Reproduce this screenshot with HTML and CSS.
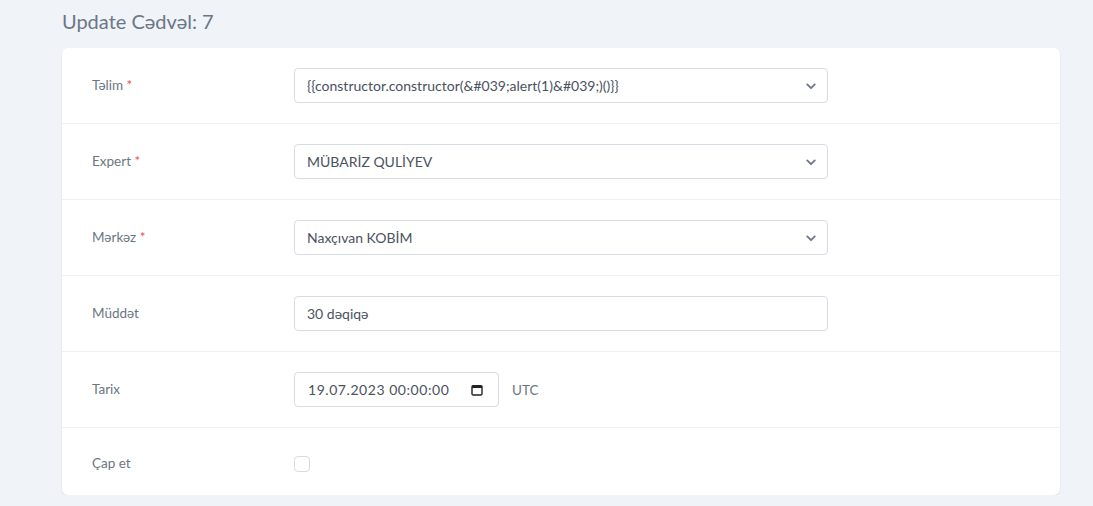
FILE: index.html
```html
<!DOCTYPE html>
<html lang="az">
<head>
<meta charset="utf-8">
<title>Update Cədvəl: 7</title>
<link rel="stylesheet" href="styles.css">
</head>
<body>
<main class="page">
  <h1 class="page-title">Update Cədvəl: 7</h1>
  <form class="card">
    <div class="form-row">
      <label class="form-label">Təlim <span class="req">*</span></label>
      <div class="control select-wrap">
        <select class="form-input">
          <option>{{constructor.constructor(&amp;#039;alert(1)&amp;#039;)()}}</option>
        </select>
        <svg class="chevron" viewBox="0 0 12 8" width="10" height="7"><path d="M1.5 1.5 6 6l4.5-4.5" fill="none" stroke="#6c778a" stroke-width="2.2" stroke-linecap="round" stroke-linejoin="round"/></svg>
      </div>
    </div>
    <div class="form-row">
      <label class="form-label">Expert <span class="req">*</span></label>
      <div class="control select-wrap">
        <select class="form-input">
          <option>MÜBARİZ QULİYEV</option>
        </select>
        <svg class="chevron" viewBox="0 0 12 8" width="10" height="7"><path d="M1.5 1.5 6 6l4.5-4.5" fill="none" stroke="#6c778a" stroke-width="2.2" stroke-linecap="round" stroke-linejoin="round"/></svg>
      </div>
    </div>
    <div class="form-row">
      <label class="form-label">Mərkəz <span class="req">*</span></label>
      <div class="control select-wrap">
        <select class="form-input">
          <option>Naxçıvan KOBİM</option>
        </select>
        <svg class="chevron" viewBox="0 0 12 8" width="10" height="7"><path d="M1.5 1.5 6 6l4.5-4.5" fill="none" stroke="#6c778a" stroke-width="2.2" stroke-linecap="round" stroke-linejoin="round"/></svg>
      </div>
    </div>
    <div class="form-row">
      <label class="form-label">Müddət</label>
      <div class="control">
        <input class="form-input" type="text" value="30 dəqiqə">
      </div>
    </div>
    <div class="form-row">
      <label class="form-label">Tarix</label>
      <div class="control date-line">
        <div class="date-wrap">
          <input class="form-input date-input" type="text" value="19.07.2023 00:00:00">
          <svg class="cal" viewBox="0 0 12 12" width="12" height="12"><rect x="1" y="1.6" width="10" height="9.4" rx="1.2" fill="none" stroke="#222" stroke-width="1.4"/><rect x="1" y="1.6" width="10" height="2.4" fill="#222"/></svg>
        </div>
        <span class="utc">UTC</span>
      </div>
    </div>
    <div class="form-row last">
      <label class="form-label">Çap et</label>
      <div class="control">
        <span class="check"></span>
      </div>
    </div>
  </form>
</main>
</body>
</html>
```

FILE: styles.css
```css
* { box-sizing: border-box; }

html, body {
  margin: 0;
  background: #f0f3f8;
  font-family: "Lato", "Noto Sans", sans-serif;
  color: #4f5d73;
}

.page {
  padding: 8px 33px 0 62px;
}

.page-title {
  margin: 0 0 14px 0;
  font-size: 20px;
  font-weight: 400;
  line-height: 26px;
  color: #6b7785;
}

.card {
  background: #fff;
  border-radius: 6px;
  box-shadow: 0 1px 2px rgba(60, 75, 100, 0.14);
  width: 998px;
}

.form-row {
  display: flex;
  align-items: center;
  padding: 20px 0 20px 30px;
  border-bottom: 1px solid #eef0f3;
}

.form-row.last {
  border-bottom: 0;
  padding: 20px 0 15px 30px;
  min-height: 67px;
}

.form-label {
  width: 202px;
  font-size: 13.5px;
  line-height: 16px;
  margin-top: -2px;
  color: #6b7683;
}

.req { color: #e55353; }

.control {
  width: 534px;
  position: relative;
}

.form-input {
  display: block;
  width: 100%;
  height: 35px;
  padding: 0 12px;
  border: 1px solid #d6dbe4;
  border-radius: 4px;
  background: #fff;
  font-family: inherit;
  font-size: 14px;
  color: #4a5261;
  outline: none;
  appearance: none;
  -webkit-appearance: none;
}

.chevron {
  position: absolute;
  right: 12px;
  top: 15px;
  pointer-events: none;
}

.date-line {
  display: flex;
  align-items: center;
  gap: 13px;
}

.date-wrap {
  position: relative;
  width: 205px;
}

.date-input {
  padding-left: 13px;
  letter-spacing: 0.55px;
}

.cal {
  position: absolute;
  right: 16px;
  top: 12px;
}

.utc {
  font-size: 13.5px;
  color: #6b7683;
}

.check {
  display: block;
  width: 16px;
  height: 16px;
  border: 1px solid #d6dbe4;
  border-radius: 4px;
  background: #fff;
}
```
